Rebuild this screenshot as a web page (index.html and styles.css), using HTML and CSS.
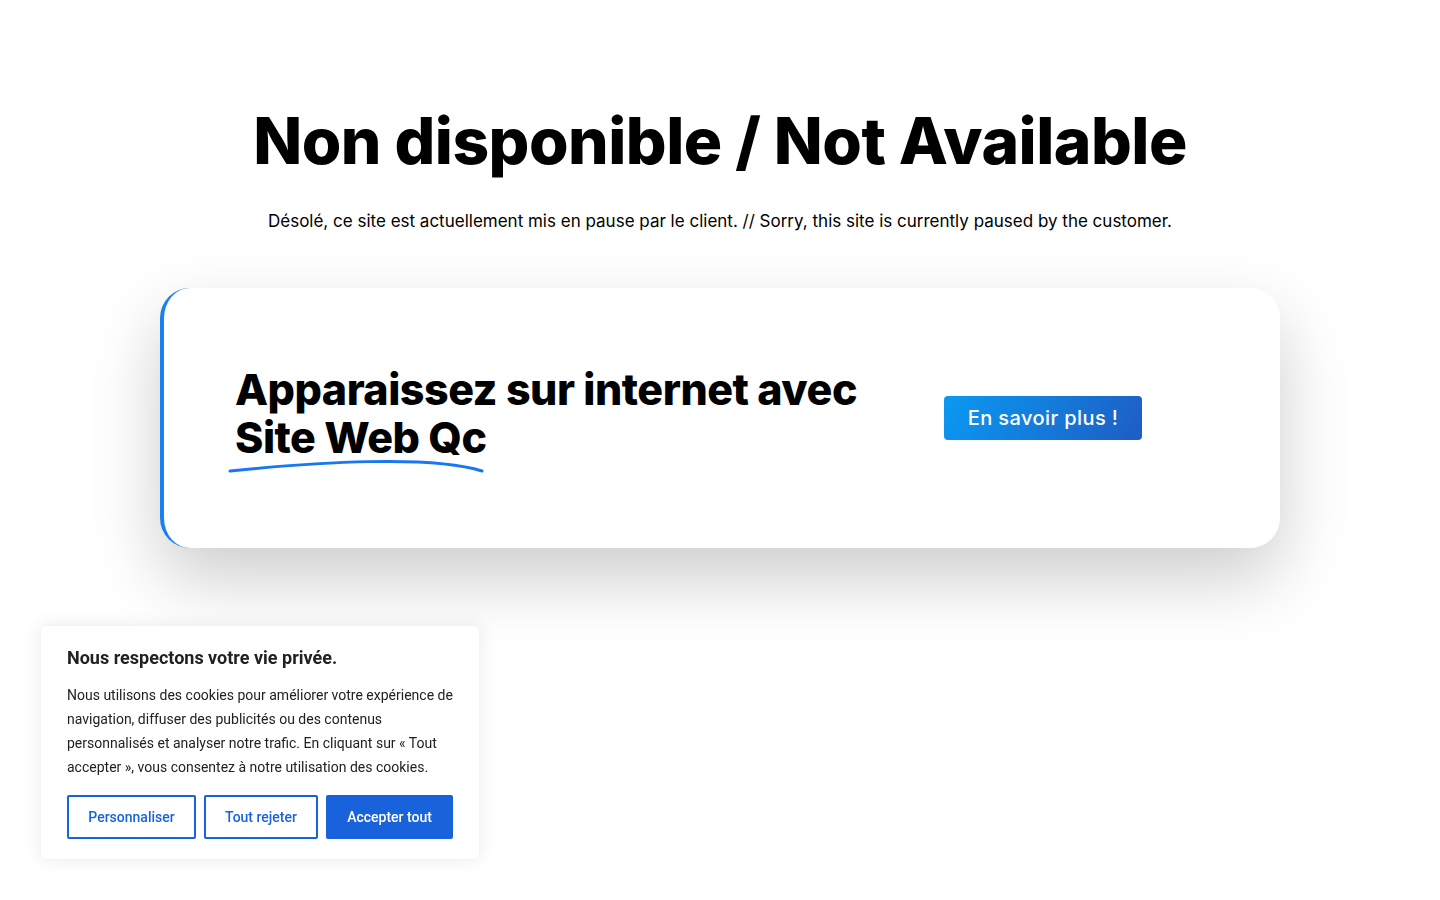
FILE: index.html
```html
<!DOCTYPE html>
<html lang="fr">
<head>
<meta charset="utf-8">
<title>Non disponible / Not Available</title>
<link rel="stylesheet" href="styles.css">
</head>
<body>
<main class="page">
  <h1 class="title">Non disponible / Not Available</h1>
  <p class="subtitle">Désolé, ce site est actuellement mis en pause par le client. // Sorry, this site is currently paused by the customer.</p>
  <section class="promo">
    <div class="promo-text">
      <h2 class="promo-heading">Apparaissez sur internet avec<br><span class="brand">Site Web Qc<svg class="swoosh" viewBox="0 0 260 16" preserveAspectRatio="none" aria-hidden="true"><path d="M2 13 C 90 4, 205 -3, 256 13" fill="none" stroke="#1877f2" stroke-width="3" stroke-linecap="round"/></svg></span></h2>
    </div>
    <a class="promo-btn" href="#">En savoir plus !</a>
  </section>
</main>

<div class="cookie">
  <p class="cookie-title">Nous respectons votre vie privée.</p>
  <p class="cookie-text">Nous utilisons des cookies pour améliorer votre expérience de navigation, diffuser des publicités ou des contenus personnalisés et analyser notre trafic. En cliquant sur « Tout accepter », vous consentez à notre utilisation des cookies.</p>
  <div class="cookie-actions">
    <button class="ck-btn ck-outline">Personnaliser</button>
    <button class="ck-btn ck-outline">Tout rejeter</button>
    <button class="ck-btn ck-fill">Accepter tout</button>
  </div>
</div>
</body>
</html>
```
FILE: styles.css
```css
* { box-sizing: border-box; }
html, body { margin: 0; padding: 0; background: #fff; }
body { font-family: "Inter", "Noto Sans", sans-serif; color: #000; min-height: 100vh; }

.page {
  width: 1120px;
  margin: 0 auto;
  padding: 96px 0 200px;
  display: flex;
  flex-direction: column;
  align-items: center;
}

.title {
  margin: 0;
  font-size: 64px;
  font-weight: 800;
  line-height: 90px;
  letter-spacing: -0.5px;
  text-align: center;
}

.subtitle {
  margin: 23px 0 0;
  font-size: 17px;
  line-height: 24px;
  font-weight: 400;
  text-align: center;
}

.promo {
  margin-top: 55px;
  width: 1120px;
  height: 260px;
  background: #fff;
  border-left: 4px solid #1a7ff0;
  border-radius: 30px;
  box-shadow: 0 30px 70px rgba(0, 0, 0, 0.2);
  display: flex;
  align-items: center;
  justify-content: space-between;
  padding: 0 138px 0 71px;
}

.promo-text { padding-bottom: 10px; }

.promo-heading {
  margin: 0;
  font-size: 43px;
  line-height: 48px;
  font-weight: 800;
  letter-spacing: -0.5px;
}

.brand { position: relative; display: inline-block; }
.swoosh {
  position: absolute;
  left: -7px;
  bottom: -13px;
  width: 258px;
  height: 16px;
}

.promo-btn {
  display: inline-flex;
  align-items: center;
  justify-content: center;
  width: 198px;
  height: 44px;
  border-radius: 4px;
  background: linear-gradient(120deg, #0a9af2 0%, #1f5cc4 100%);
  color: #fff;
  text-decoration: none;
  font-size: 20px;
  font-weight: 500;
  letter-spacing: 0.4px;
}

.cookie {
  position: fixed;
  left: 40px;
  bottom: 40px;
  width: 440px;
  background: #fff;
  border: 1px solid #f4f4f4;
  border-radius: 6px;
  box-shadow: 0 0 18px rgba(0, 0, 0, 0.08);
  padding: 18px 26px 20px;
  font-family: "Roboto", sans-serif;
  color: #212121;
}
.cookie-title {
  margin: 0 0 11px;
  font-size: 18px;
  line-height: 28px;
  font-weight: 700;
}
.cookie-text {
  margin: 0;
  font-size: 14px;
  line-height: 24px;
}
.cookie-actions {
  display: flex;
  gap: 8px;
  margin-top: 16px;
}
.ck-btn {
  height: 44px;
  border: 2px solid #1863dc;
  border-radius: 2px;
  font-family: "Roboto", sans-serif;
  font-size: 14px;
  font-weight: 500;
  padding: 0 19px;
  cursor: pointer;
}
.ck-outline { background: #fff; color: #1863dc; }
.ck-fill { background: #1863dc; color: #fff; }
.ck-btn:nth-child(1) { width: 129px; }
.ck-btn:nth-child(2) { width: 114px; }
.ck-btn:nth-child(3) { width: 127px; }
```
